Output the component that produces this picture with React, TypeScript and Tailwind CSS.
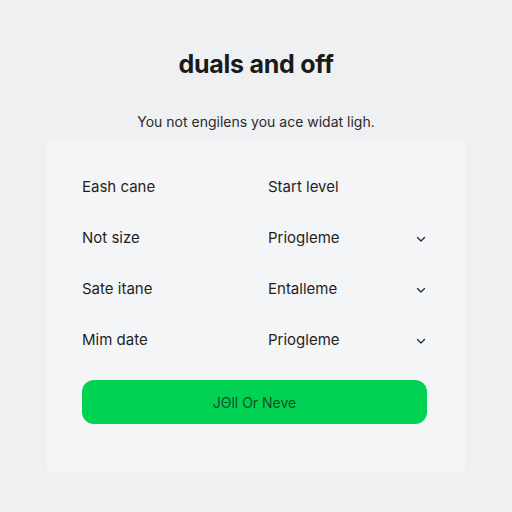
import React from "react";

const rows = [
  { label: "Eash cane", value: "Start level", chevron: false },
  { label: "Not size", value: "Priogleme", chevron: true },
  { label: "Sate itane", value: "Entalleme", chevron: true },
  { label: "Mim date", value: "Priogleme", chevron: true },
];

function Chevron() {
  return (
    <svg width="12" height="12" viewBox="0 0 24 24" fill="none" stroke="#1f2937" strokeWidth="2.6" strokeLinecap="round" strokeLinejoin="round">
      <path d="M5 9l7 7 7-7" />
    </svg>
  );
}

export default function App() {
  return (
    <div className="w-[512px] h-[512px] bg-[#eff0f2] flex flex-col items-center font-['Inter',sans-serif] text-[#1f1f1f]">
      <h1 className="mt-[48px] text-[25px] leading-[33px] font-bold tracking-[-0.01em] text-[#1a1a1a]">duals and off</h1>
      <p className="mt-[31px] text-[14px] leading-[20px] text-[#2a2a2a]">You not engilens you ace widat ligh.</p>

      <div className="mt-[6px] w-[422px] h-[336px] bg-[#f4f5f7] rounded-lg border border-[#ecedef] pt-[23px] pl-[36px] pr-[39px]">
        {rows.map((r) => (
          <div key={r.label + r.value} className="h-[51px] flex items-center text-[15px]">
            <span className="w-[186px]">{r.label}</span>
            <span className="flex-1">{r.value}</span>
            {r.chevron && <Chevron />}
          </div>
        ))}
        <button className="mt-[14px] w-full h-[44px] rounded-xl bg-[#02d254] text-[14px] text-[#0e4f26]">
          JΘll Or Neve
        </button>
      </div>
    </div>
  );
}
